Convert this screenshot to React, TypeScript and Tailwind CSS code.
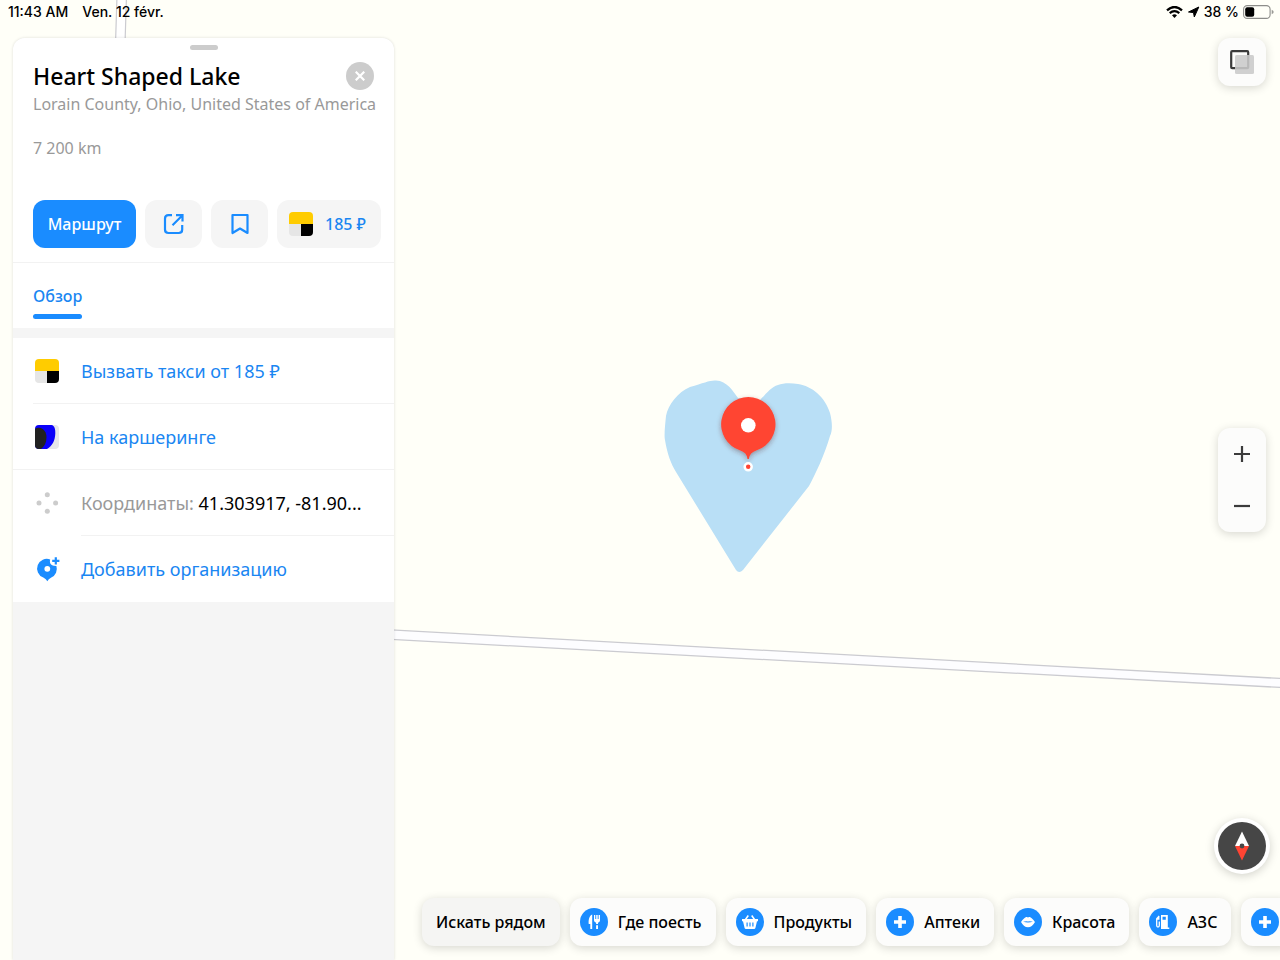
import type { ReactNode } from "react";

function MapCanvas() {
  return (
    <svg
      className="absolute inset-0 h-full w-full"
      viewBox="0 0 1280 960"
      preserveAspectRatio="xMidYMid slice"
      role="img"
      aria-label="Heart Shaped Lake"
    >
      <defs>
        <filter id="pinShadow" x="-50%" y="-50%" width="200%" height="200%">
          <feDropShadow dx="0" dy="2" stdDeviation="2.5" floodColor="#5a2a20" floodOpacity="0.4" />
        </filter>
      </defs>
      <rect width="1280" height="960" fill="#fffff8" />
      <path d="M117 -4 L115 60 L124.500 60 L126.500 -4Z" fill="#ffffff" stroke="#cbcbd0" strokeWidth="1.2" />
      <path d="M200 619.500 L1290 679 L1290 688 L200 629Z" fill="#fdfdff" stroke="#cbcbd0" strokeWidth="1.3" />
      <path
        d="M738 398 C733 391 727 381 716 380.500 C710 380 704 383 690 387 C678 392 668 405 666 416 C665 426 664 436 665 440 C667 453 671 464 676 472 L736 570 Q739 574 743 570 L809 486 C815 475 825 454 830 436 C833 430 832 421 830 413 C825 397 812 386 798 384 C791 383 783 383 778 385 C771 387 766 394 760 400 Z"
        fill="#b9dff6"
      />
      <path
        d="M748.300 397 a27.300 27.300 0 0 1 8.500 53.200 Q749.500 452.500 748.800 459 H747.500 Q747 452.500 739.800 450.200 A27.300 27.300 0 0 1 748.300 397Z"
        fill="#ff4433"
        filter="url(#pinShadow)"
      />
      <circle cx="748.300" cy="425.300" r="7.300" fill="#fff" />
      <circle cx="748.200" cy="466.800" r="3.500" fill="#f43" stroke="#fff" strokeWidth="2.500" />
    </svg>
  );
}

function StatusBar() {
  return (
    <header className="flex h-6 items-center justify-between pr-[6px] pl-2 font-['Inter','Liberation_Sans',sans-serif] text-sm font-medium text-black">
      <div className="flex gap-[14px]">
        <span>11:43 AM</span>
        <span>Ven. 12 févr.</span>
      </div>
      <div className="flex items-center gap-1">
        <svg width="17" height="12" viewBox="0 0 17 12" aria-hidden="true">
          <path d="M1 4.300 Q8.500 -2.300 16 4.300" fill="none" stroke="#000" strokeWidth="2.300" />
          <path d="M3.700 7.200 Q8.500 3.200 13.300 7.200" fill="none" stroke="#000" strokeWidth="2.200" />
          <path d="M6 9.300 Q8.500 7.300 11 9.300 L8.500 11.900Z" />
        </svg>
        <svg width="13" height="12" viewBox="0 0 13 12" aria-hidden="true">
          <path d="M11.800 1 7.300 11 6.500 6.600 1.500 6Z" stroke="#000" strokeWidth="1" strokeLinejoin="round" />
        </svg>
        <span>38 %</span>
        <svg width="31" height="14" viewBox="0 0 31 14" aria-hidden="true">
          <rect x=".6" y=".6" width="26.500" height="12.800" rx="3.700" fill="none" stroke="#8d8d8a" strokeWidth="1.100" />
          <rect x="2.200" y="2.200" width="9" height="9.600" rx="2" />
          <path d="M28.700 4.700 q2 .8 2 2.300 t-2 2.300Z" fill="#9a9a96" />
        </svg>
      </div>
    </header>
  );
}

function TaxiIcon() {
  return (
    <svg width="24" height="24" viewBox="0 0 24 24" aria-hidden="true">
      <path d="M0 12 V4 Q0 0 4 0 H20 Q24 0 24 4 V12Z" fill="#fc0" />
      <path d="M0 12 H12 V24 H4 Q0 24 0 20Z" fill="#e6e6e6" />
      <path d="M12 12 H24 V20 Q24 24 20 24 H12Z" fill="#000" />
    </svg>
  );
}

function DriveIcon() {
  return (
    <svg width="24" height="24" viewBox="0 0 24 24" aria-hidden="true">
      <rect width="24" height="24" rx="4" fill="#e6e6ea" />
      <path d="M4 0 H16.500 C19.500 .5 20.500 4 20.300 8.500 C20 15.500 17.500 21 12 24 H4 Q0 24 0 20 V4 Q0 0 4 0Z" fill="#0a00fa" />
      <path d="M0 5 Q0 2.500 4 2.800 C9 3.200 11.500 7.500 11.500 12.500 C11.500 17.500 9.500 21.500 6 24 H4 Q0 24 0 20Z" fill="#212121" />
    </svg>
  );
}

function CoordinatesIcon() {
  return (
    <svg width="24" height="24" viewBox="0 0 24 24" fill="#ccc" aria-hidden="true">
      <circle cx="12.300" cy="3.700" r="2.500" />
      <circle cx="12.300" cy="20.300" r="2.500" />
      <circle cx="4" cy="12" r="2.500" />
      <circle cx="20.600" cy="12" r="2.500" />
    </svg>
  );
}

function AddPlaceIcon() {
  return (
    <svg width="24" height="24" viewBox="0 0 24 24" fill="#1a8cff" className="overflow-visible" aria-hidden="true">
      <path d="M12.300 24.200 Q11.300 22 8.300 20.500 A9.600 9.600 0 1 1 15.200 2.500 C14.200 5.500 15.800 8.600 19 8.700 L21.400 8.900 A9.600 9.600 0 0 1 16.300 20.500 Q13.300 22 12.300 24.200Z" />
      <circle cx="12.300" cy="11.800" r="2.900" fill="#fff" />
      <path d="M19.700 .3 h2.200 v2.500 h2.500 v2.200 h-2.500 v2.500 h-2.200 v-2.500 h-2.500 v-2.200 h2.500Z" />
    </svg>
  );
}

function ShareIcon() {
  return (
    <svg width="22" height="22" viewBox="0 0 22 22" fill="none" stroke="#1a8cff" strokeWidth="2.200" aria-hidden="true">
      <path d="M9 2.200 H5.500 Q2 2.200 2 5.700 V16.500 Q2 20 5.500 20 H15.700 Q19.200 20 19.200 16.500 V12" />
      <path d="M13 2.200 H19.500 V8.500 M19.500 2.200 L9.500 12.200" />
    </svg>
  );
}

function BookmarkIcon() {
  return (
    <svg width="22" height="22" viewBox="0 0 22 22" fill="none" stroke="#1a8cff" strokeWidth="2.200" strokeLinejoin="round" aria-hidden="true">
      <path d="M3.500 2 H18.500 V20 L11 15.500 L3.500 20Z" />
    </svg>
  );
}

const chipIcons = {
  food: (
    <>
      <path d="M12.200 6.500 V21 H10.300 V16 H8.700 C8.300 11.500 9.500 7.500 12.200 6.500Z" />
      <path d="M14 7 h1.300 v4 h.9 V7 h1.500 v4 h.9 V7 H20 v5.500 q0 1.500 -2 2.200 v1.300 h-1.900 v-1.300 q-2.100 -.7 -2.100 -2.200Z M16.100 17.300 h1.900 V21 h-1.900Z" />
    </>
  ),
  basket: (
    <>
      <path d="M9.500 11.500 L12.300 7.500 M18.500 11.500 L15.700 7.500" stroke="#fff" strokeWidth="1.500" />
      <path
        fillRule="evenodd"
        d="M6 11 H22 V13.200 H21 L19.400 20 Q19.200 21 18 21 H10 Q8.800 21 8.600 20 L7 13.200 H6Z M10.500 14.500 v4 h1.200 v-4Z M13.400 14.500 v4 h1.200 v-4Z M16.300 14.500 v4 h1.200 v-4Z"
      />
    </>
  ),
  plus: <path d="M12.200 8 h3.600 v4.200 H20 v3.600 h-4.200 V20 h-3.600 v-4.200 H8 v-3.600 h4.200Z" />,
  lips: (
    <>
      <path d="M7 14 C8.500 11.800 11 9 12.800 9 Q13.500 9 14 9.500 Q14.500 9 15.200 9 C17 9 19.500 11.800 21 14 C19 17.500 16.800 19.300 14 19.300 C11.200 19.300 9 17.500 7 14Z" />
      <path d="M9 13.800 Q11.500 13 14 13.400 Q16.500 13 19 13.800 Q14 15.400 9 13.800Z" fill="#1a8cff" />
    </>
  ),
  fuel: (
    <>
      <path fillRule="evenodd" d="M12 7 H18.800 V19.500 H20.300 V21 H12Z M13.500 8.800 V11.800 H16.800 V8.800Z" />
      <path d="M10.200 8 L7.700 10.800 V17.500 Q7.700 19 9 19 Q10.300 19 10.300 17.500 V13.500 M7.700 11 H9.800 V9" fill="none" stroke="#fff" strokeWidth="1.300" />
    </>
  ),
};

type ChipIcon = keyof typeof chipIcons;

const chips: { icon: ChipIcon; label: string }[] = [
  { icon: "food", label: "Где поесть" },
  { icon: "basket", label: "Продукты" },
  { icon: "plus", label: "Аптеки" },
  { icon: "lips", label: "Красота" },
  { icon: "fuel", label: "АЗС" },
  { icon: "plus", label: "" },
];

function SearchChips() {
  return (
    <nav aria-label="Искать рядом" className="flex gap-[10px] overflow-hidden pt-6 pb-[14px] pl-7 text-base font-medium text-black">
      <button className="h-12 shrink-0 rounded-xl bg-[#f5f5f3] px-[14px] shadow-[0_2px_10px_rgba(0,0,0,0.16)]">Искать рядом</button>
      {chips.map(({ icon, label }, i) => (
        <button
          key={i}
          aria-label={label || "Ещё"}
          className="flex h-12 shrink-0 items-center gap-[10px] rounded-xl bg-[#fcfcfb] pr-[14px] pl-[10px] shadow-[0_2px_10px_rgba(0,0,0,0.16)]"
        >
          <svg width="28" height="28" viewBox="0 0 28 28" fill="#fff" aria-hidden="true">
            <circle cx="14" cy="14" r="14" fill="#1a8cff" />
            {chipIcons[icon]}
          </svg>
          {label}
        </button>
      ))}
    </nav>
  );
}

function Row({ icon, children, divider }: { icon: ReactNode; children: ReactNode; divider?: ReactNode }) {
  return (
    <li className="flex h-[66px] flex-col">
      <a href="#" className="flex flex-1 items-center gap-[22px] pr-5 pl-[22px] text-lg whitespace-nowrap text-[#1a86f2]">
        <span className="shrink-0">{icon}</span>
        <span className="min-w-0">{children}</span>
      </a>
      {divider}
    </li>
  );
}

function PlacePanel() {
  return (
    <aside className="mt-[14px] ml-[13px] flex w-[381px] shrink-0 flex-col overflow-hidden rounded-t-xl bg-[#f5f5f5] shadow-[0_0_3px_rgba(0,0,0,0.14)]">
      <section className="bg-white px-5 pb-[14px]">
        <div className="flex justify-center pt-[7px]">
          <span className="h-[5px] w-7 rounded-full bg-[#ccc]" />
        </div>
        <div className="mt-[10px] flex h-8 items-center justify-between">
          <h1 className="text-[23px] leading-8 font-medium text-black">Heart Shaped Lake</h1>
          <button aria-label="Закрыть" className="flex size-7 items-center justify-center rounded-full bg-[#ccc]">
            <svg width="10" height="10" viewBox="0 0 10 10" stroke="#fff" strokeWidth="2.200" aria-hidden="true">
              <path d="M.7 .7 9.300 9.300 M9.300 .7 .7 9.300" />
            </svg>
          </button>
        </div>
        <p className="text-base leading-6 whitespace-nowrap text-[#999]">Lorain County, Ohio, United States of America</p>
        <p className="mt-5 text-base leading-6 text-[#999]">7 200 km</p>
        <div className="-mr-3 mt-10 flex gap-[9px] text-base font-medium">
          <button className="h-12 w-[103px] shrink-0 rounded-xl bg-[#1a8cff] text-white">Маршрут</button>
          <button aria-label="Поделиться" className="flex h-12 w-[57px] shrink-0 items-center justify-center rounded-xl bg-[#f5f5f5]">
            <ShareIcon />
          </button>
          <button aria-label="Сохранить" className="flex h-12 w-[57px] shrink-0 items-center justify-center rounded-xl bg-[#f5f5f5]">
            <BookmarkIcon />
          </button>
          <button className="flex h-12 w-[104px] shrink-0 items-center gap-3 rounded-xl bg-[#f5f5f5] pl-3 whitespace-nowrap text-[#1a86f2]">
            <TaxiIcon />
            185 ₽
          </button>
        </div>
      </section>
      <nav className="flex h-[66px] items-end border-t border-[#f2f2f2] bg-white px-5 pb-[9px]">
        <a href="#" className="flex flex-col gap-[6px] text-base font-medium text-[#1a86f2]">
          Обзор
          <span className="h-[5px] rounded-full bg-[#1a8cff]" />
        </a>
      </nav>
      <ul className="mt-[10px] bg-white">
        <Row icon={<TaxiIcon />} divider={<hr className="ml-5 border-[#f2f2f2]" />}>
          Вызвать такси от 185 ₽
        </Row>
        <Row icon={<DriveIcon />} divider={<hr className="border-[#f2f2f2]" />}>
          На каршеринге
        </Row>
        <Row icon={<CoordinatesIcon />} divider={<hr className="ml-[68px] border-[#f2f2f2]" />}>
          <span className="text-[#999]">Координаты:</span> <span className="text-black">41.303917, -81.90...</span>
        </Row>
        <Row icon={<AddPlaceIcon />}>Добавить организацию</Row>
      </ul>
    </aside>
  );
}

function MapControls() {
  return (
    <section className="flex min-w-0 flex-1 flex-col pt-[14px]">
      <button
        aria-label="Слои"
        className="mr-[14px] flex size-12 items-center justify-center self-end rounded-xl bg-[#fcfcfb] shadow-[0_2px_10px_rgba(0,0,0,0.16)]"
      >
        <svg width="24" height="24" viewBox="0 0 24 24" aria-hidden="true">
          <rect x="1.200" y="1.200" width="17" height="17" rx="1" fill="none" stroke="#3b3b3b" strokeWidth="2.200" />
          <rect x="5" y="5" width="19" height="19" rx="1.500" fill="#c9c9c9" fillOpacity=".88" />
        </svg>
      </button>
      <div className="mr-[14px] flex flex-1 items-center self-end pt-14">
        <div className="flex w-12 flex-col rounded-xl bg-[#fcfcfb] shadow-[0_2px_10px_rgba(0,0,0,0.16)]">
          <button aria-label="Приблизить" className="flex h-[52px] items-center justify-center">
            <svg width="16" height="16" viewBox="0 0 16 16" stroke="#3b3b3b" strokeWidth="2.200" aria-hidden="true">
              <path d="M0 8 H16 M8 0 V16" />
            </svg>
          </button>
          <button aria-label="Отдалить" className="flex h-[52px] items-center justify-center">
            <svg width="16" height="16" viewBox="0 0 16 16" stroke="#3b3b3b" strokeWidth="2.200" aria-hidden="true">
              <path d="M0 8 H16" />
            </svg>
          </button>
        </div>
      </div>
      <button
        aria-label="Компас"
        className="mr-[10px] flex size-14 items-center justify-center self-end rounded-full bg-white shadow-[0_2px_10px_rgba(0,0,0,0.18)]"
      >
        <svg width="48" height="48" viewBox="0 0 48 48" aria-hidden="true">
          <circle cx="24" cy="24" r="24" fill="#464646" />
          <path d="M24 9.500 L31 24 H17Z" fill="#fff" />
          <path d="M24 38.500 L31 24 H17Z" fill="#ff4433" />
          <circle cx="24" cy="24" r="2.400" fill="#464646" />
        </svg>
      </button>
      <SearchChips />
    </section>
  );
}

export default function App() {
  return (
    <div className="relative isolate flex min-h-screen flex-col overflow-hidden bg-[#fffff8] font-['Noto_Sans','Open_Sans',sans-serif]">
      <div className="absolute inset-0 -z-10">
        <MapCanvas />
      </div>
      <StatusBar />
      <main className="flex flex-1">
        <PlacePanel />
        <MapControls />
      </main>
    </div>
  );
}
